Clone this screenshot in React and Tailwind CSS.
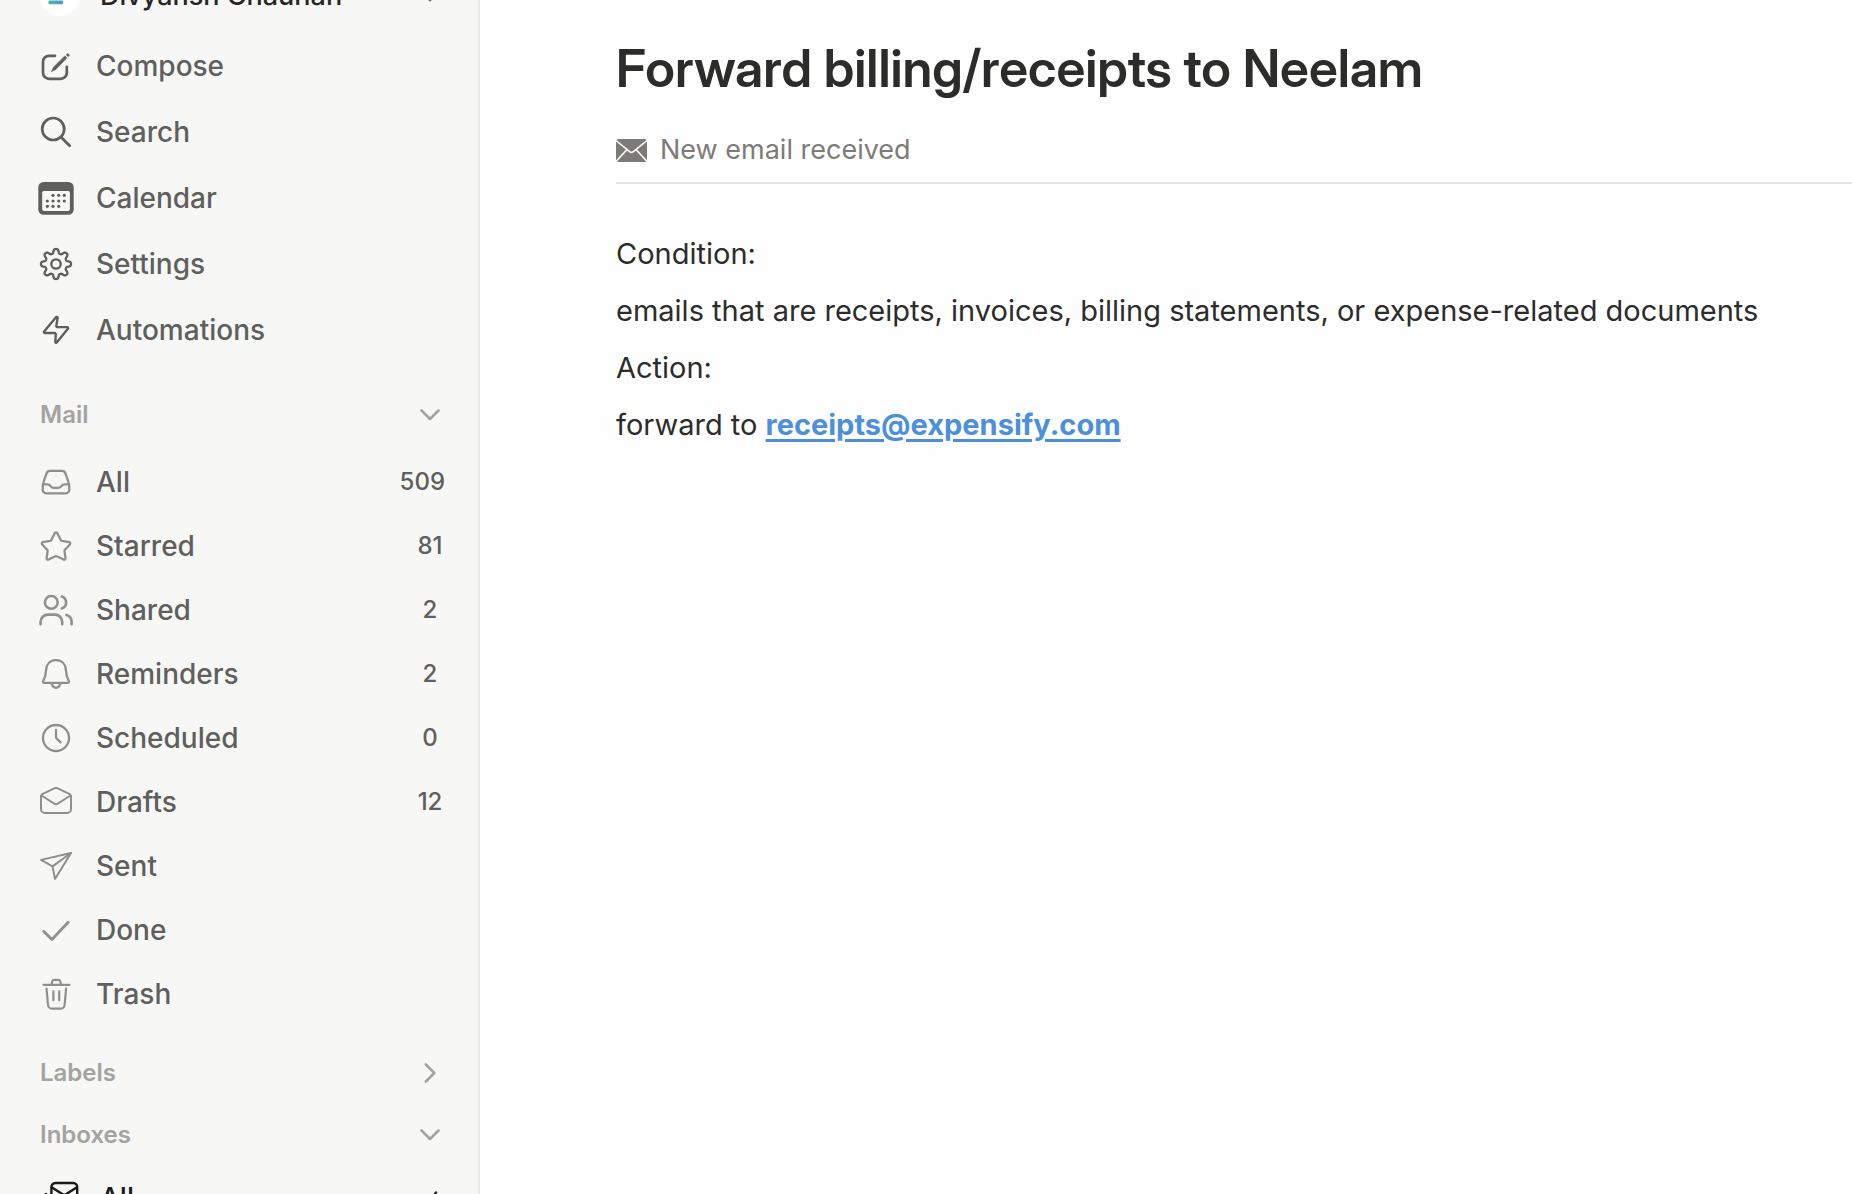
const GEAR_PATH = (() => {
  const points = [];
  for (let i = 0; i < 160; i += 1) {
    const a = (i / 160) * Math.PI * 2;
    const r = 12.9 + 2.1 * Math.tanh(1.7 * Math.cos(8 * a)) / Math.tanh(1.7);
    points.push(`${(16 + r * Math.sin(a)).toFixed(2)} ${(16 - r * Math.cos(a)).toFixed(2)}`);
  }
  return `M${points.join("L")}Z`;
})();

function Icon({ stroke = 2.3, children }) {
  return (
    <svg
      viewBox="0 0 32 32"
      className="size-8 shrink-0 overflow-visible"
      fill="none"
      stroke="currentColor"
      strokeWidth={stroke}
      strokeLinecap="round"
      strokeLinejoin="round"
      aria-hidden="true"
    >
      {children}
    </svg>
  );
}

const ComposeIcon = () => (
  <Icon stroke={2.7}>
    <path d="M15 5.8H9a6 6 0 0 0-6 6v11a6 6 0 0 0 6 6h11.8a6 6 0 0 0 6-6v-6" />
    <path d="M11.6 21.4l2-4.4L24.800 5.900l2.100 2.100L16 19.200z" fill="currentColor" strokeWidth="0.6" />
    <path d="M27.600 4.800l.6.600" />
  </Icon>
);

const SearchIcon = () => (
  <Icon stroke={2.7}>
    <circle cx="13.2" cy="13" r="11" />
    <path d="M21.2 21.2L29.700 29.700" />
  </Icon>
);

const CALENDAR_DOTS = [
  [13, 13.3], [18.7, 13.3], [24.3, 13.3],
  [7.3, 19], [13, 19], [18.7, 19], [24.3, 19],
  [7.3, 24.3], [13, 24.3], [18.7, 24.3],
];

const CalendarIcon = () => (
  <Icon>
    <path
      fill="currentColor"
      stroke="none"
      fillRule="evenodd"
      d="M3.500 0h25a5.200 5.200 0 0 1 5.200 5.200v22.300a5.200 5.200 0 0 1-5.200 5.200h-25a5.200 5.200 0 0 1-5.200-5.200V5.200A5.200 5.200 0 0 1 3.500 0zM3.700 8.900a1.500 1.500 0 0 0-1.500 1.500v16.800a1.700 1.700 0 0 0 1.700 1.700h24.300a1.700 1.700 0 0 0 1.700-1.700V10.400a1.500 1.500 0 0 0-1.500-1.500z"
    />
    {CALENDAR_DOTS.map(([x, y]) => (
      <circle key={`${x}-${y}`} cx={x} cy={y} r="1.6" fill="currentColor" stroke="none" />
    ))}
  </Icon>
);

const SettingsIcon = () => (
  <Icon stroke={2.3}>
    <path d={GEAR_PATH} />
    <circle cx="16" cy="16" r="4.700" />
  </Icon>
);

const BoltIcon = () => (
  <Icon stroke={2.4}>
    <path d="M15.800 3.400L4.300 17.200c-.8 1-.3 1.800.8 1.800H15l.8 1L15.300 28c0 1 .8 1.200 1.400.4l11-13.400c.8-1 .4-1.900-.8-1.900H17l-.7-.8L17.600 4c.1-1.100-1-1.500-1.800-.6z" />
  </Icon>
);

const InboxIcon = () => (
  <Icon>
    <path d="M10 4.800h12a3.600 3.600 0 0 1 3.400 2.500c1.200 3.500 3.900 10 3.900 13.200v3.300a3.500 3.500 0 0 1-3.500 3.500H6.200a3.500 3.500 0 0 1-3.500-3.500v-3.300c0-3.200 2.700-9.700 3.900-13.200A3.600 3.600 0 0 1 10 4.800z" />
    <path d="M3 18.300h4.600c1.500 0 2.200.7 3 1.800.9 1.200 1.600 1.700 3 1.700h4.800c1.400 0 2.100-.5 3-1.700.8-1.100 1.500-1.800 3-1.800H29" />
  </Icon>
);

const StarIcon = () => (
  <Icon>
    <path d="M14.700 3.200c.6-1.100 2-1.100 2.600 0l3.500 6.900c.2.400.6.700 1.100.8l7.200 1.200c1.200.2 1.600 1.500.8 2.400l-5 5.300c-.3.300-.5.800-.4 1.300l1 6.900c.2 1.200-1 2-2 1.500l-6.800-3.200c-.4-.2-.9-.2-1.300 0l-6.800 3.200c-1.100.5-2.200-.3-2-1.500l1-6.900c.1-.5-.1-1-.4-1.300l-5-5.300c-.8-.9-.4-2.200.8-2.400l7.200-1.200c.5-.1.900-.4 1.100-.8z" />
  </Icon>
);

const SharedIcon = () => (
  <Icon stroke={2.6}>
    <circle cx="11.300" cy="8.400" r="6.400" />
    <path d="M.6 30.200v-2.400a7.200 7.200 0 0 1 7.200-7.200h7.200a7.200 7.200 0 0 1 7.200 7.200v2.400" />
    <path d="M21.800 2.600a6.200 6.200 0 0 1 0 11.800M26.500 21a7 7 0 0 1 5.100 6.800v2.400" />
  </Icon>
);

const BellIcon = () => (
  <Icon>
    <path d="M16 2.200C9.900 2.200 6.300 6.300 6.100 12c-.2 5-1 7.600-2.800 10.700-.6 1.100-.1 2.100 1.100 2.100h23.200c1.200 0 1.700-1 1.100-2.100-1.800-3.100-2.600-5.700-2.800-10.700C25.700 6.300 22.100 2.200 16 2.200z" />
    <path d="M11.600 25.300c.6 2.900 2.200 4.500 4.400 4.500s3.800-1.600 4.400-4.500" />
  </Icon>
);

const ClockIcon = () => (
  <Icon>
    <circle cx="16" cy="16" r="13" />
    <path d="M16 8v6.500c0 1 .3 1.700 1 2.400l3.600 3.400" />
  </Icon>
);

const DraftsIcon = () => (
  <Icon stroke={2}>
    <path d="M14.800 2.200L2.300 8.200c-.8.400-1.300 1.100-1.300 2V23a4 4 0 0 0 4 4h22a4 4 0 0 0 4-4V10.200c0-.9-.5-1.600-1.300-2L17.200 2.200a2.800 2.800 0 0 0-2.400 0z" />
    <path d="M1.500 9.500l12.700 8.200a3.400 3.400 0 0 0 3.600 0L30.500 9.500" />
  </Icon>
);

const SentIcon = () => (
  <Icon stroke={2}>
    <path d="M31 3L1 9.900l11.500 6.500L15 29z" />
    <path d="M31 3L12.500 16.400" />
  </Icon>
);

const DoneIcon = () => (
  <Icon stroke={2.8}>
    <path d="M3.800 17.400l8.100 8.100L28.200 8.300" />
  </Icon>
);

const TrashIcon = () => (
  <Icon stroke={2.2}>
    <path d="M3.500 6.800h26M11.500 6.600l.8-3.200A2.300 2.300 0 0 1 14.500 1.800h3.600a2.300 2.300 0 0 1 2.200 1.600l.8 3.200" />
    <path d="M6.500 10.500l1.500 16.500a3.800 3.800 0 0 0 3.800 3.600h9a3.800 3.800 0 0 0 3.800-3.600l1.500-16.500" />
    <path d="M13.400 13.300v9M19.200 13.300v9" />
  </Icon>
);

const AllMailIcon = () => (
  <svg
    viewBox="0 0 40 32"
    className="h-8 w-10 shrink-0 overflow-visible"
    fill="none"
    stroke="currentColor"
    strokeWidth="2.4"
    strokeLinecap="round"
    strokeLinejoin="round"
    aria-hidden="true"
  >
    <rect x="11.400" y="1" width="25.800" height="19.500" rx="4" />
    <path d="M12 5.500l10.700 6.800a3 3 0 0 0 3.200 0L36.600 5.500" />
    <path d="M6 12c-1.800.7-2.600 1.800-2.600 3.800v7.200a5 5 0 0 0 5 5h18c2 0 3.400-.8 4.300-2.500" />
  </svg>
);

function Chevron({ open = true }) {
  return (
    <svg
      viewBox="0 0 30 30"
      className="size-[30px] shrink-0"
      fill="none"
      stroke="currentColor"
      strokeWidth="2.6"
      strokeLinecap="round"
      strokeLinejoin="round"
      aria-hidden="true"
    >
      <path d={open ? "M6.500 10.500l8.500 8.500 8.500-8.500" : "M10.800 6.500l8.500 8.500-8.500 8.500"} />
    </svg>
  );
}

const PRIMARY = [
  { label: "Compose", icon: ComposeIcon },
  { label: "Search", icon: SearchIcon },
  { label: "Calendar", icon: CalendarIcon },
  { label: "Settings", icon: SettingsIcon },
  { label: "Automations", icon: BoltIcon },
];

const MAIL = [
  { label: "All", icon: InboxIcon, count: 509 },
  { label: "Starred", icon: StarIcon, count: 81 },
  { label: "Shared", icon: SharedIcon, count: 2 },
  { label: "Reminders", icon: BellIcon, count: 2 },
  { label: "Scheduled", icon: ClockIcon, count: 0 },
  { label: "Drafts", icon: DraftsIcon, count: 12 },
  { label: "Sent", icon: SentIcon },
  { label: "Done", icon: DoneIcon },
  { label: "Trash", icon: TrashIcon },
];

function SectionHeader({ label, open }) {
  return (
    <button type="button" aria-expanded={open} className="flex h-[62px] w-full items-center justify-between text-left text-2xl font-semibold text-[#a3a3a1]">
      <span>{label}</span>
      <Chevron open={open} />
    </button>
  );
}

export default function App() {
  return (
    <div className="flex h-screen overflow-hidden bg-[#fefefe] font-['Inter',sans-serif]">
      <aside className="w-[480px] shrink-0 overflow-hidden border-r-2 border-[#e9e9e8] bg-[#f7f7f5] pr-[33px] pl-10 text-[#5f5f5d]">
        <button type="button" className="-mt-6 flex h-10 w-full items-center gap-5 text-left text-[27px] font-medium text-[#262626]">
          <span className="flex size-10 shrink-0 items-center justify-center rounded-full bg-white">
            <svg viewBox="0 0 40 40" className="size-10" aria-hidden="true">
              <defs>
                <linearGradient id="avatar" x1="0" x2="1">
                  <stop offset="0" stopColor="#4fb3a5" />
                  <stop offset="1" stopColor="#4a9bd0" />
                </linearGradient>
              </defs>
              <rect x="8.500" y="24.500" width="14.500" height="3.800" rx="1" fill="url(#avatar)" />
            </svg>
          </span>
          <span className="grow whitespace-nowrap">Divyansh Chauhan</span>
          <span className="text-[#6b6b69]">
            <Chevron />
          </span>
        </button>

        <nav aria-label="Main" className="mt-[17px]">
          {PRIMARY.map(({ label, icon: Glyph }) => (
            <button key={label} type="button" className="flex h-[66px] w-full items-center gap-6 text-left text-[28px] font-medium">
              <Glyph />
              <span>{label}</span>
            </button>
          ))}
        </nav>

        <section className="mt-[21px]">
          <SectionHeader label="Mail" open />
          <ul className="mt-1">
            {MAIL.map(({ label, icon: Glyph, count }) => (
              <li key={label}>
                <button type="button" className="flex h-16 w-full items-center gap-6 text-left text-[28px] font-medium">
                  <span className="text-[#8f8f8d]">
                    <Glyph />
                  </span>
                  <span className="grow">{label}</span>
                  {count !== undefined && <span className="min-w-[30px] text-center text-2xl font-medium">{count}</span>}
                </button>
              </li>
            ))}
          </ul>
        </section>

        <section className="mt-4">
          <SectionHeader label="Labels" open={false} />
        </section>

        <section>
          <SectionHeader label="Inboxes" open />
          <button type="button" className="flex h-16 w-full items-center gap-5 text-left text-[28px] font-medium text-[#1a1a1a]">
            <AllMailIcon />
            <span className="grow">All</span>
            <svg viewBox="0 0 30 30" className="size-[30px]" fill="none" stroke="currentColor" strokeWidth="2.400" strokeLinecap="round" strokeLinejoin="round" aria-hidden="true">
              <path d="M6 18l5 6L21 9.500" />
            </svg>
          </button>
        </section>
      </aside>

      <main className="min-w-0 grow overflow-hidden pt-8 pl-[136px] text-[#2c2c2b]">
        <h1 className="text-[52px] leading-[74px] font-semibold whitespace-nowrap [font-family:'Inter_Display','Inter',sans-serif] [font-variation-settings:'opsz'_32]">
          Forward billing/receipts to Neelam
        </h1>
        <div className="mt-3 flex h-[66px] items-center gap-[13px] border-b-2 border-[#e4e4e3] text-[27px] text-[#7c7b78]">
          <svg viewBox="0 0 31 23" className="h-[23px] w-[31px] shrink-0" aria-hidden="true">
            <rect width="31" height="23" rx="2.500" fill="currentColor" />
            <path d="M0 1.500L14 12.800a2.400 2.400 0 0 0 3 0L31 1.500M0 22.500l11-12M31 22.500l-11-12" fill="none" stroke="#fefefe" strokeWidth="1.600" />
          </svg>
          <span>New email received</span>
        </div>
        <div className="mt-[41px] text-[29px] leading-[57px]">
          <p>Condition:</p>
          <p className="whitespace-nowrap">emails that are receipts, invoices, billing statements, or expense-related documents</p>
          <p>Action:</p>
          <p>
            forward to{" "}
            <a href="mailto:receipts@expensify.com" className="font-bold text-[#4d8fdb] underline decoration-3 underline-offset-4">
              receipts@expensify.com
            </a>
          </p>
        </div>
      </main>
    </div>
  );
}
